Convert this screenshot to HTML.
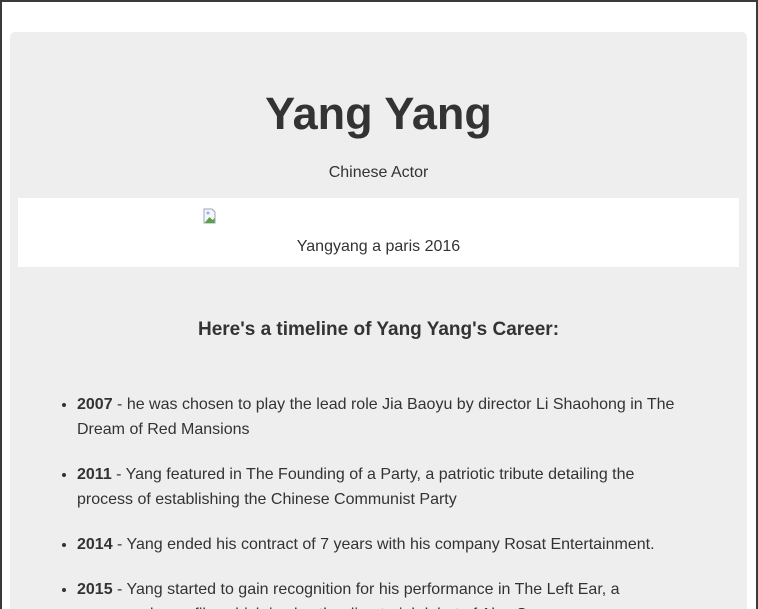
<!DOCTYPE html>
<html><head><meta charset="utf-8"><style>
html,body{margin:0;padding:0;height:609px;overflow:hidden}
body{width:758px;background:#fff;font-family:"Liberation Sans",Arial,sans-serif;color:#333;box-sizing:border-box;border:2px solid #3a3a3a;border-bottom:none;position:relative}
.card{position:absolute;left:8px;top:30px;width:721px;height:600px;background:#eee;border-radius:5px;padding:0 8px}
h1{margin:0;position:absolute;top:54px;left:0;right:0;text-align:center;font-size:45px;font-weight:bold;line-height:56px}
.sub{position:absolute;top:131px;left:0;right:0;text-align:center;font-size:16px;line-height:20px}
.img{position:absolute;left:8px;top:166px;width:721px;height:69px;background:#fff}
.icon{position:absolute;left:185px;top:10px;width:16px;height:16px}
.cap{position:absolute;top:40px;left:0;right:0;text-align:center;font-size:16px;line-height:18px}
h2{position:absolute;top:286px;left:0;right:0;margin:0;text-align:center;font-size:19px;line-height:24px;font-weight:bold}
ul{position:absolute;top:360px;left:8px;width:608px;margin:0;padding:0 0 0 59px;font-size:16px;line-height:25px}
li{margin-bottom:20px}
</style></head><body>
<div class="card">
<h1>Yang Yang</h1>
<div class="sub">Chinese Actor</div>
<div class="img"><svg class="icon" viewBox="0 0 16 16"><path d="M1 1h8l3 3v11H1z" fill="#f4f6fa" stroke="#9aa7b8"/><path d="M1.5 15l5-6 3 3 2-2v5z" fill="#5da04a"/><circle cx="5" cy="5" r="1.5" fill="#8ab4e8"/></svg><div class="cap">Yangyang a paris 2016</div></div>
<h2>Here's a timeline of Yang Yang's Career:</h2>
<ul>
<li><b>2007</b> - he was chosen to play the lead role Jia Baoyu by director Li Shaohong in The Dream of Red Mansions</li>
<li><b>2011</b> - Yang featured in The Founding of a Party, a patriotic tribute detailing the process of establishing the Chinese Communist Party</li>
<li><b>2014</b> - Yang ended his contract of 7 years with his company Rosat Entertainment.</li>
<li><b>2015</b> - Yang started to gain recognition for his performance in The Left Ear, a romance-drama film which is also the directorial debut of Alec Su</li>
</ul>
</div>
</body></html>
